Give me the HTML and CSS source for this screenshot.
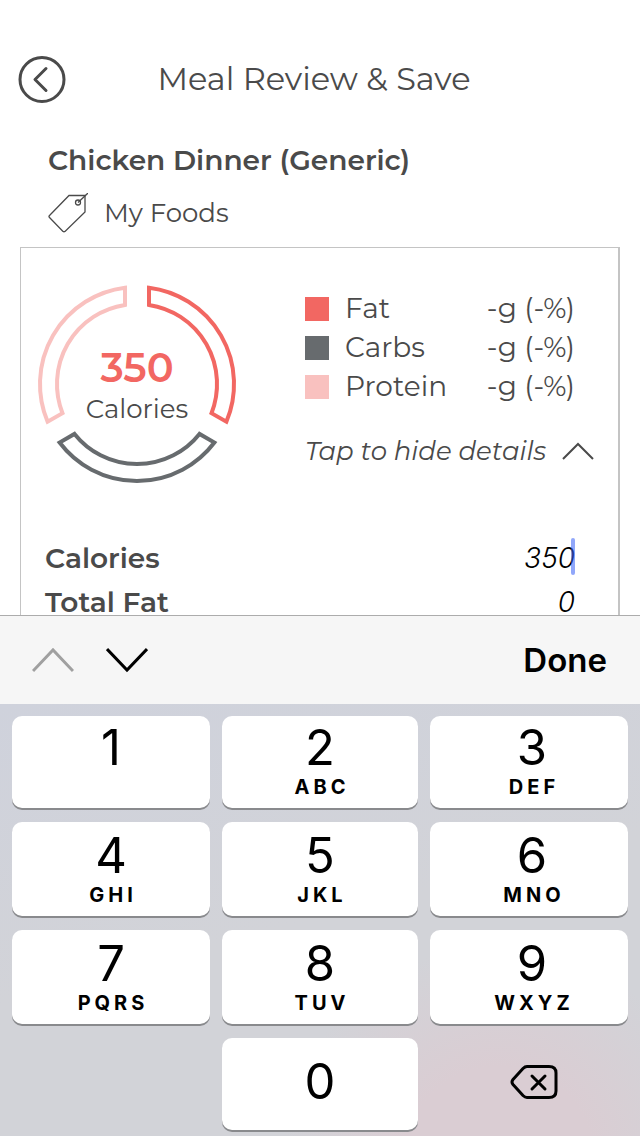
FILE: index.html
```html
<!DOCTYPE html>
<html lang="en">

<head>
    <meta charset="UTF-8">
    <meta name="viewport" content="width=device-width, initial-scale=1.0">
    <title>Meal Review &amp; Save</title>
    <link rel="stylesheet" href="styles.css">
</head>

<body>
    <main class="content">
        <header class="header">
            <button class="back" type="button" aria-label="Back">
                <svg width="48" height="48" viewBox="0 0 48 48">
                    <circle cx="24" cy="24.500" r="22" />
                    <path d="M28 13.500L17 24.500L28 35.500" />
                </svg>
            </button>
            <h1 class="title">Meal Review &amp; Save</h1>
        </header>

        <section class="meal">
            <h2 class="meal-name">Chicken Dinner (Generic)</h2>
            <p class="meal-source">
                <svg class="tag" width="40" height="40" viewBox="0 0 40 40" aria-hidden="true">
                    <path d="M21 2.500H37V19L17 38.500Q16 39 15 38.500L1.500 24.500Q.5 23.500 1.500 22.500Z" />
                    <circle cx="30" cy="9.500" r="2.500" />
                    <path d="M30 9.500L40 0" />
                </svg>
                <span>My Foods</span>
            </p>
        </section>

        <section class="card">
            <div class="summary">
                <div class="chart">
                    <svg width="200" height="200" viewBox="-100 -100 200 200" aria-hidden="true">
                        <path class="fat" d="M12 -96.250A97 97 0 0 1 89.400 37.700L74.500 29.200A80 80 0 0 0 12 -79.100Z" />
                        <path class="carbs" d="M77.400 58.500A97 97 0 0 1 -77.400 58.500L-62.500 49.900A80 80 0 0 0 62.500 49.900Z" />
                        <path class="protein" d="M-12 -96.250A97 97 0 0 0 -89.400 37.700L-74.500 29.200A80 80 0 0 1 -12 -79.100Z" />
                    </svg>
                    <div class="chart-text">
                        <strong>350</strong>
                        <span>Calories</span>
                    </div>
                </div>

                <div class="macros">
                    <table class="legend">
                        <tr>
                            <th scope="row"><span class="swatch swatch-fat"></span>Fat</th>
                            <td>-g (-%)</td>
                        </tr>
                        <tr>
                            <th scope="row"><span class="swatch swatch-carbs"></span>Carbs</th>
                            <td>-g (-%)</td>
                        </tr>
                        <tr>
                            <th scope="row"><span class="swatch swatch-protein"></span>Protein</th>
                            <td>-g (-%)</td>
                        </tr>
                    </table>
                    <button class="toggle" type="button" aria-expanded="true">
                        Tap to hide details
                        <svg width="32" height="18" viewBox="0 0 32 18" aria-hidden="true">
                            <path d="M1 17L16 2L31 17" />
                        </svg>
                    </button>
                </div>
            </div>

            <form class="details">
                <div class="field">
                    <label for="calories">Calories</label>
                    <input type="text" id="calories" name="calories" inputmode="numeric" value="350">
                    <span class="caret"></span>
                </div>
                <div class="field">
                    <label for="totalFat">Total Fat</label>
                    <input type="text" id="totalFat" name="totalFat" inputmode="numeric" value="0">
                </div>
            </form>
        </section>
    </main>

    <section class="keyboard" aria-label="Keyboard">
        <div class="toolbar">
            <button class="nav" type="button" aria-label="Previous field" disabled>
                <svg width="42" height="26" viewBox="0 0 42 26">
                    <path d="M1 24L21 3L41 24" />
                </svg>
            </button>
            <button class="nav" type="button" aria-label="Next field">
                <svg width="42" height="26" viewBox="0 0 42 26">
                    <path d="M1 2L21 23L41 2" />
                </svg>
            </button>
            <button class="done" type="button">Done</button>
        </div>
        <div class="keys">
            <button class="key" type="button">1<small></small></button>
            <button class="key" type="button">2<small>ABC</small></button>
            <button class="key" type="button">3<small>DEF</small></button>
            <button class="key" type="button">4<small>GHI</small></button>
            <button class="key" type="button">5<small>JKL</small></button>
            <button class="key" type="button">6<small>MNO</small></button>
            <button class="key" type="button">7<small>PQRS</small></button>
            <button class="key" type="button">8<small>TUV</small></button>
            <button class="key" type="button">9<small>WXYZ</small></button>
            <button class="key key-zero" type="button">0</button>
            <button class="delete" type="button" aria-label="Delete">
                <svg width="48" height="36" viewBox="0 0 48 36">
                    <path d="M17 2.500H39Q46 2.500 46 9V27Q46 33.500 39 33.500H17Q15 33.500 13 31.500L3 20.500Q1 18 3 15.500L13 4.500Q15 2.500 17 2.500Z" />
                    <path d="M22 12L35 25M35 12L22 25" />
                </svg>
            </button>
        </div>
    </section>
</body>

</html>
```
FILE: styles.css
```css
* {
    box-sizing: border-box;
}

body {
    display: flex;
    flex-direction: column;
    height: 100vh;
    margin: 0;
    background-color: #fff;
    color: #4a4a4a;
    font-family: Montserrat, Inter, sans-serif;
    font-weight: 400;
}

button {
    padding: 0;
    border: none;
    background: none;
    color: inherit;
    font: inherit;
    cursor: pointer;
}

svg {
    display: block;
    fill: none;
    stroke: currentColor;
}

h1,
h2,
p {
    margin: 0;
}

.content {
    flex: 1;
    min-height: 0;
    overflow: hidden;
    padding: 55px 20px 0;
}

/* Header */
.header {
    display: grid;
    grid-template-columns: 48px 1fr 60px;
    align-items: center;
    margin: 0 -2px;
}

.back svg {
    stroke-width: 3;
    stroke-linecap: round;
    stroke-linejoin: round;
}

.title {
    text-align: center;
    font-size: 32px;
    font-weight: 400;
    line-height: 48px;
}

/* Meal name */
.meal {
    padding: 37px 28px 13px;
}

.meal-name {
    font-size: 28px;
    font-weight: 600;
    line-height: 40px;
}

.meal-source {
    display: flex;
    align-items: center;
    gap: 16px;
    margin-top: 12px;
    font-size: 26px;
    line-height: 42px;
}

.tag {
    stroke-width: 1.3;
}

/* Card */
.card {
    min-height: 600px;
    padding: 36px 24px 0;
    border: 1px solid #c4c4c4;
    border-right-width: 2px;
}

.summary {
    display: flex;
    justify-content: space-between;
    margin-left: -8px;
}

.chart {
    display: grid;
    place-items: center;
    width: 200px;
    height: 200px;
}

.chart svg,
.chart-text {
    grid-area: 1 / 1;
}

.chart svg {
    stroke-width: 4;
}

.chart-text {
    display: flex;
    flex-direction: column;
    align-items: center;
    padding-top: 8px;
    font-size: 26px;
    line-height: 40px;
}

.chart-text strong {
    color: #f26762;
    font-size: 40px;
    font-weight: 600;
    line-height: 42px;
}

.fat {
    stroke: #f26762;
}

.carbs {
    stroke: #676b6e;
}

.protein {
    stroke: #f9c1bf;
}

.macros {
    width: 289px;
    padding-top: 5px;
}

.legend {
    width: 270px;
    border-collapse: collapse;
    font-size: 28px;
    line-height: 39px;
}

.legend th,
.legend td {
    padding: 0;
    font-weight: 400;
}

.legend th {
    display: flex;
    align-items: center;
    gap: 16px;
}

.legend td {
    text-align: right;
}

.swatch {
    width: 24px;
    height: 24px;
}

.swatch-fat {
    background-color: #f26762;
}

.swatch-carbs {
    background-color: #676b6e;
}

.swatch-protein {
    background-color: #f9c1bf;
}

.toggle {
    display: flex;
    align-items: center;
    justify-content: space-between;
    width: 100%;
    margin-top: 25px;
    font-size: 26px;
    font-style: italic;
    line-height: 40px;
    white-space: nowrap;
}

.toggle svg {
    stroke-width: 2;
}

/* Nutrition fields */
.details {
    margin-top: 52px;
}

.field {
    position: relative;
    display: flex;
    align-items: center;
    justify-content: space-between;
    height: 44px;
    padding-right: 19px;
}

.field label {
    font-size: 28px;
    font-weight: 600;
    line-height: 24px;
}

.field input {
    width: 160px;
    padding: 0;
    border: none;
    outline: none;
    background: none;
    color: #000;
    font-family: Inter, sans-serif;
    font-size: 28px;
    font-style: italic;
    font-weight: 300;
    text-align: right;
}

.caret {
    position: absolute;
    top: 2px;
    right: 19px;
    width: 4px;
    height: 37px;
    border-radius: 2px;
    background-color: rgba(54, 94, 245, 0.55);
}

/* Keyboard */
.keyboard {
    color: #000;
    font-family: Inter, sans-serif;
}

.toolbar {
    display: flex;
    align-items: center;
    gap: 32px;
    height: 89px;
    padding: 0 33px 0 32px;
    border-top: 1px solid #acacac;
    background-color: #f6f6f6;
}

.nav svg {
    stroke-width: 3;
}

.nav:disabled {
    color: #a0a0a0;
}

.done {
    margin-left: auto;
    font-size: 33px;
    font-weight: 600;
}

.keys {
    display: grid;
    grid-template-columns: 198fr 196fr 198fr;
    grid-template-rows: 92px 94px 94px 92px;
    gap: 14px 12px;
    padding: 12px 12px 6px;
    background: radial-gradient(circle at 78% 106%, #dacdd3 0, #dacdd3 14%, rgba(218, 205, 211, 0) 32%), linear-gradient(165deg, #cfd2dc, #d2d3d8 50%);
}

.key {
    display: flex;
    flex-direction: column;
    align-items: center;
    justify-content: flex-end;
    gap: 9px;
    padding-bottom: 11px;
    border-radius: 10px;
    background-color: #fff;
    box-shadow: 0 2px 0 #898a8d;
    font-size: 49px;
    font-weight: 400;
    line-height: 40px;
}

.key:nth-child(3n) {
    padding-left: 6px;
}

.key small {
    height: 20px;
    padding-left: 4px;
    font-size: 20px;
    font-weight: 700;
    letter-spacing: 4px;
    line-height: 20px;
}

.key-zero {
    grid-column: 2;
    justify-content: center;
    padding-bottom: 4px;
}

.delete {
    display: grid;
    place-items: center;
    padding-bottom: 4px;
}

.delete svg {
    margin-left: 10px;
    stroke-width: 3;
    stroke-linecap: round;
    stroke-linejoin: round;
}
```
